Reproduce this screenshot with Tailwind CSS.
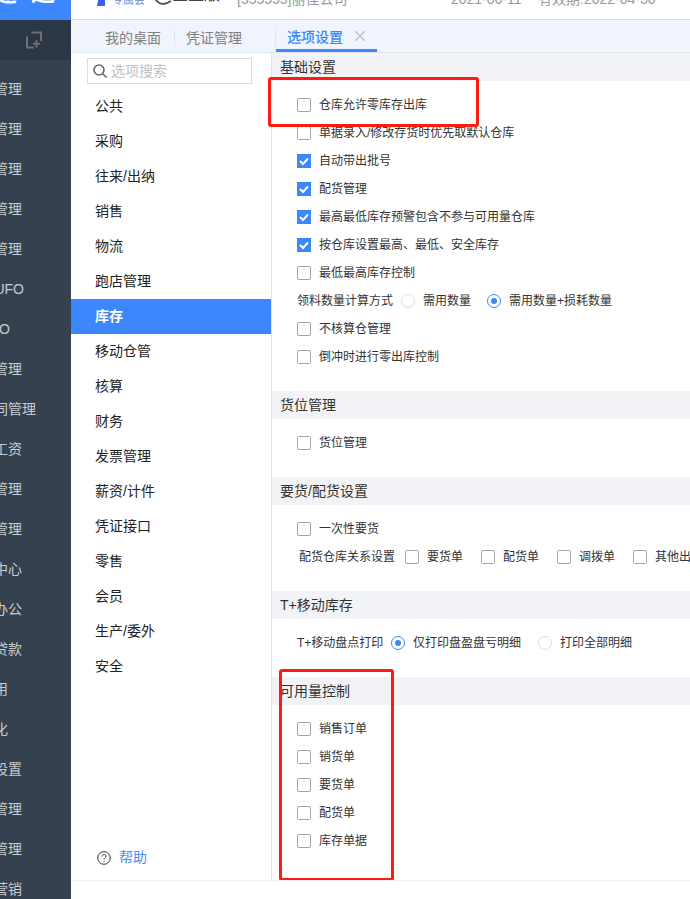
<!DOCTYPE html>
<html lang="zh">
<head>
    <script src="https://cdn.jsdelivr.net/npm/@tailwindcss/browser@4"></script>
    <meta charset="UTF-8">
    <title>选项设置</title>
</head>
<body class="w-[690px] h-[899px] overflow-hidden bg-white font-['Liberation_Sans','Noto_Sans_CJK_SC',sans-serif]">
<div class="relative flex w-[690px] h-[899px] overflow-hidden">
    <!-- Sidebar -->
    <aside class="w-[71px] shrink-0 bg-[#364150] text-[14px] leading-5 text-[#c8ccd2]">
        <div class="h-5 bg-[#3b87fb] overflow-hidden relative text-[24px] leading-7 font-bold text-white whitespace-nowrap">
            <span class="absolute left-[-7px] top-[-21px]">逹</span>
            <span class="absolute left-[31px] top-[-21px]">速</span>
        </div>
        <div class="h-10 bg-[#2b3647] flex items-center">
            <svg class="w-[18px] h-[18px] ml-[25px] text-[#6f6f6f]" viewBox="0 0 18 18" fill="none" stroke="currentColor" stroke-width="2">
                <path d="M6.500 1.500H16V10M2 5.500V16.500H9M11.500 9V16.500M8 12.700H15"/>
            </svg>
        </div>
        <div class="pt-[19px] flex flex-col">
            <div class="h-10 flex justify-end w-[22px] whitespace-nowrap">管理</div>
            <div class="h-10 flex justify-end w-[22px] whitespace-nowrap">管理</div>
            <div class="h-10 flex justify-end w-[22px] whitespace-nowrap">管理</div>
            <div class="h-10 flex justify-end w-[22px] whitespace-nowrap">管理</div>
            <div class="h-10 flex justify-end w-[22px] whitespace-nowrap">管理</div>
            <div class="h-10 flex justify-end w-[24px] whitespace-nowrap">UFO</div>
            <div class="h-10 flex justify-end w-[10px] whitespace-nowrap">O</div>
            <div class="h-10 flex justify-end w-[22px] whitespace-nowrap">管理</div>
            <div class="h-10 flex justify-end w-[36px] whitespace-nowrap">同管理</div>
            <div class="h-10 flex justify-end w-[22px] whitespace-nowrap">工资</div>
            <div class="h-10 flex justify-end w-[22px] whitespace-nowrap">管理</div>
            <div class="h-10 flex justify-end w-[22px] whitespace-nowrap">管理</div>
            <div class="h-10 flex justify-end w-[22px] whitespace-nowrap">中心</div>
            <div class="h-10 flex justify-end w-[22px] whitespace-nowrap">办公</div>
            <div class="h-10 flex justify-end w-[22px] whitespace-nowrap">贷款</div>
            <div class="h-10 flex justify-end w-[8px] whitespace-nowrap">用</div>
            <div class="h-10 flex justify-end w-[8px] whitespace-nowrap">化</div>
            <div class="h-10 flex justify-end w-[22px] whitespace-nowrap">设置</div>
            <div class="h-10 flex justify-end w-[22px] whitespace-nowrap">管理</div>
            <div class="h-10 flex justify-end w-[22px] whitespace-nowrap">管理</div>
            <div class="h-10 flex justify-end w-[22px] whitespace-nowrap">营销</div>
        </div>
    </aside>

    <main class="flex-1 min-w-0 flex flex-col">
        <!-- Header -->
        <header class="h-5 shrink-0 relative overflow-hidden border-b border-[#d9dde5] text-[14px] text-[#999]">
            <svg class="absolute left-[26px] top-[-4px] w-[8px] h-[10px] text-[#3b5ff0]" viewBox="0 0 8 10" fill="currentColor"><path d="M2 0H8V10H0Z"/></svg>
            <span class="absolute left-[41px] top-[-10px] text-[11px] leading-5 text-[#6f8fd8]">专属会</span>
            <svg class="absolute left-[82px] top-[-14px] w-[19px] h-[19px] text-[#555]" viewBox="0 0 19 19" fill="none" stroke="currentColor" stroke-width="2"><path d="M1 7C1 14 6 18 10 18C13 18 15 17 18 15"/></svg>
            <span class="absolute left-[101px] top-[-19px] text-[16px] leading-7 text-[#444] whitespace-nowrap">企业版</span>
            <span class="absolute left-[166px] top-[-11px] leading-5 whitespace-nowrap">[555555]丽佳公司</span>
            <span class="absolute left-[380px] top-[-11px] leading-5 whitespace-nowrap">2021-06-11</span>
            <span class="absolute left-[467px] top-[-11px] leading-5 whitespace-nowrap">有效期:2022-04-30</span>
        </header>

        <!-- Tabs -->
        <div class="h-[33px] shrink-0 flex items-start bg-[#f0f4fc] border-b border-[#e1e5ec] text-[14px] text-[#808080]">
            <div class="pl-[34px] w-[103px] h-[32px] leading-[36px]">我的桌面</div>
            <div class="mt-[10px] h-4 w-px bg-[#dfe3ea]"></div>
            <div class="pl-[11px] w-[100px] h-[32px] leading-[36px]">凭证管理</div>
            <div class="mt-[10px] h-4 w-px bg-[#dfe3ea]"></div>
            <div class="w-[101px] h-[32px] pl-[11px] flex items-center gap-[11px] border-b-[3px] border-[#3b87fb] text-[#3b87fb] font-medium">
                <span class="leading-5 mt-[4px]">选项设置</span>
                <svg class="w-3 h-3 mt-[2px] text-[#c4c4c4]" viewBox="0 0 12 12" fill="none" stroke="currentColor" stroke-width="1.5"><path d="M1 1L11 11M11 1L1 11"/></svg>
            </div>
        </div>

        <div class="flex flex-1 min-h-0">
            <!-- Option category nav -->
            <nav class="w-[200px] shrink-0 text-[14px] text-[#222] flex flex-col">
                <div class="mt-[5px] ml-[16px] w-[165px] h-[26px] border border-[#dcdcdc] flex items-center pl-1 gap-[3px] text-[14px] text-[#c0c0c0]">
                    <svg class="w-4 h-4 text-[#666]" viewBox="0 0 16 16" fill="none" stroke="currentColor" stroke-width="1.6"><circle cx="7" cy="7" r="5"/><path d="M10.700 10.700L14.500 14.500"/></svg>
                    选项搜索
                </div>
                <div class="mt-[5px] flex flex-col">
                    <div class="h-[35px] pl-6 leading-[35px]">公共</div>
                    <div class="h-[35px] pl-6 leading-[35px]">采购</div>
                    <div class="h-[35px] pl-6 leading-[35px]">往来/出纳</div>
                    <div class="h-[35px] pl-6 leading-[35px]">销售</div>
                    <div class="h-[35px] pl-6 leading-[35px]">物流</div>
                    <div class="h-[35px] pl-6 leading-[35px]">跑店管理</div>
                    <div class="h-[35px] pl-6 leading-[35px] bg-[#3b87fb] text-white font-bold">库存</div>
                    <div class="h-[35px] pl-6 leading-[35px]">移动仓管</div>
                    <div class="h-[35px] pl-6 leading-[35px]">核算</div>
                    <div class="h-[35px] pl-6 leading-[35px]">财务</div>
                    <div class="h-[35px] pl-6 leading-[35px]">发票管理</div>
                    <div class="h-[35px] pl-6 leading-[35px]">薪资/计件</div>
                    <div class="h-[35px] pl-6 leading-[35px]">凭证接口</div>
                    <div class="h-[35px] pl-6 leading-[35px]">零售</div>
                    <div class="h-[35px] pl-6 leading-[35px]">会员</div>
                    <div class="h-[35px] pl-6 leading-[35px]">生产/委外</div>
                    <div class="h-[35px] pl-6 leading-[35px]">安全</div>
                </div>
                <div class="mt-[163px] ml-[26px] flex items-center gap-2 text-[14px] text-[#4d8dfb]">
                    <svg class="w-[14px] h-[14px] text-[#333]" viewBox="0 0 14 14" fill="none" stroke="currentColor"><circle cx="7" cy="7" r="6.300"/><path d="M5 5.400C5 2.900 9 2.900 9 5.200C9 6.800 7 6.800 7 8.600"/><path d="M7 10V11"/></svg>
                    帮助
                </div>
            </nav>

            <!-- Options -->
            <section class="flex-1 min-w-0 h-[827px] border-l border-[#e2e2e2] text-[12px] text-[#333] overflow-hidden">
                <h2 class="h-7 pl-2 bg-[#f2f3f7] text-[14px] leading-7 font-normal">基础设置</h2>
                <div class="h-[310px] pt-[10px] pl-[25px] flex flex-col">
                    <label class="h-7 flex items-center gap-2"><span class="w-[14px] h-[14px] rounded-[2px] border border-[#a6a6a6]"></span>仓库允许零库存出库</label>
                    <label class="h-7 flex items-center gap-2"><span class="w-[14px] h-[14px] rounded-[2px] border border-[#a6a6a6]"></span>单据录入/修改存货时优先取默认仓库</label>
                    <label class="h-7 flex items-center gap-2"><span class="w-[14px] h-[14px] bg-[#3b87fb] flex items-center justify-center"><svg class="w-[10px] h-[10px]" viewBox="0 0 10 10" fill="none" stroke="white" stroke-width="2"><path d="M1 5L4 8L9 2.500"/></svg></span>自动带出批号</label>
                    <label class="h-7 flex items-center gap-2"><span class="w-[14px] h-[14px] bg-[#3b87fb] flex items-center justify-center"><svg class="w-[10px] h-[10px]" viewBox="0 0 10 10" fill="none" stroke="white" stroke-width="2"><path d="M1 5L4 8L9 2.500"/></svg></span>配货管理</label>
                    <label class="h-7 flex items-center gap-2"><span class="w-[14px] h-[14px] bg-[#3b87fb] flex items-center justify-center"><svg class="w-[10px] h-[10px]" viewBox="0 0 10 10" fill="none" stroke="white" stroke-width="2"><path d="M1 5L4 8L9 2.500"/></svg></span>最高最低库存预警包含不参与可用量仓库</label>
                    <label class="h-7 flex items-center gap-2"><span class="w-[14px] h-[14px] bg-[#3b87fb] flex items-center justify-center"><svg class="w-[10px] h-[10px]" viewBox="0 0 10 10" fill="none" stroke="white" stroke-width="2"><path d="M1 5L4 8L9 2.500"/></svg></span>按仓库设置最高、最低、安全库存</label>
                    <label class="h-7 flex items-center gap-2"><span class="w-[14px] h-[14px] rounded-[2px] border border-[#a6a6a6]"></span>最低最高库存控制</label>
                    <div class="h-7 flex items-center">
                        <span class="w-[104px]">领料数量计算方式</span>
                        <span class="w-[14px] h-[14px] rounded-full border border-[#dcdcdc]"></span>
                        <span class="ml-2 w-[64px]">需用数量</span>
                        <span class="w-[14px] h-[14px] rounded-full border border-[#3b87fb] flex items-center justify-center"><span class="w-[6px] h-[6px] rounded-full bg-[#3b87fb]"></span></span>
                        <span class="ml-2">需用数量+损耗数量</span>
                    </div>
                    <label class="h-7 flex items-center gap-2"><span class="w-[14px] h-[14px] rounded-[2px] border border-[#a6a6a6]"></span>不核算仓管理</label>
                    <label class="h-7 flex items-center gap-2"><span class="w-[14px] h-[14px] rounded-[2px] border border-[#a6a6a6]"></span>倒冲时进行零出库控制</label>
                </div>

                <h2 class="h-7 pl-2 bg-[#f2f3f7] text-[14px] leading-7 font-normal">货位管理</h2>
                <div class="h-[58px] pt-[10px] pl-[25px]">
                    <label class="h-7 flex items-center gap-2"><span class="w-[14px] h-[14px] rounded-[2px] border border-[#a6a6a6]"></span>货位管理</label>
                </div>

                <h2 class="h-7 pl-2 bg-[#f2f3f7] text-[14px] leading-7 font-normal">要货/配货设置</h2>
                <div class="h-[86px] pt-[10px] pl-[25px]">
                    <label class="h-7 flex items-center gap-2"><span class="w-[14px] h-[14px] rounded-[2px] border border-[#a6a6a6]"></span>一次性要货</label>
                    <div class="h-7 flex items-center whitespace-nowrap">
                        <span class="w-[108px] shrink-0 pl-[2px]">配货仓库关系设置</span>
                        <span class="w-[14px] h-[14px] shrink-0 rounded-[2px] border border-[#a6a6a6]"></span><span class="ml-2 w-[54px] shrink-0">要货单</span>
                        <span class="w-[14px] h-[14px] shrink-0 rounded-[2px] border border-[#a6a6a6]"></span><span class="ml-2 w-[54px] shrink-0">配货单</span>
                        <span class="w-[14px] h-[14px] shrink-0 rounded-[2px] border border-[#a6a6a6]"></span><span class="ml-2 w-[54px] shrink-0">调拨单</span>
                        <span class="w-[14px] h-[14px] shrink-0 rounded-[2px] border border-[#a6a6a6]"></span><span class="ml-2 shrink-0">其他出库单</span>
                    </div>
                </div>

                <h2 class="h-7 pl-2 bg-[#f2f3f7] text-[14px] leading-7 font-normal">T+移动库存</h2>
                <div class="h-[58px] pt-[10px] pl-[25px]">
                    <div class="h-7 flex items-center whitespace-nowrap">
                        <span class="w-[94px]">T+移动盘点打印</span>
                        <span class="w-[14px] h-[14px] rounded-full border border-[#3b87fb] flex items-center justify-center"><span class="w-[6px] h-[6px] rounded-full bg-[#3b87fb]"></span></span>
                        <span class="ml-2 w-[125px]">仅打印盘盈盘亏明细</span>
                        <span class="w-[14px] h-[14px] rounded-full border border-[#dcdcdc]"></span>
                        <span class="ml-2">打印全部明细</span>
                    </div>
                </div>

                <h2 class="h-7 pl-2 bg-[#f2f3f7] text-[14px] leading-7 font-normal">可用量控制</h2>
                <div class="pt-[10px] pl-[25px]">
                    <label class="h-7 flex items-center gap-2"><span class="w-[14px] h-[14px] rounded-[2px] border border-[#a6a6a6]"></span>销售订单</label>
                    <label class="h-7 flex items-center gap-2"><span class="w-[14px] h-[14px] rounded-[2px] border border-[#a6a6a6]"></span>销货单</label>
                    <label class="h-7 flex items-center gap-2"><span class="w-[14px] h-[14px] rounded-[2px] border border-[#a6a6a6]"></span>要货单</label>
                    <label class="h-7 flex items-center gap-2"><span class="w-[14px] h-[14px] rounded-[2px] border border-[#a6a6a6]"></span>配货单</label>
                    <label class="h-7 flex items-center gap-2"><span class="w-[14px] h-[14px] rounded-[2px] border border-[#a6a6a6]"></span>库存单据</label>
                </div>
            </section>
        </div>
    </main>

    <!-- Red annotation boxes over the screenshot -->
    <div class="absolute left-[268px] top-[77px] w-[211px] h-[50px] border-[3px] border-[#fb1c13] rounded-[3px]"></div>
    <div class="absolute left-[279px] top-[669px] w-[115px] h-[212px] border-[3px] border-[#fb1c13] rounded-[3px]"></div>
    <div class="absolute left-[71px] right-0 top-[880px] h-[19px] bg-white border-t border-[#f0f0f0]"></div>
</div>
</body>
</html>
